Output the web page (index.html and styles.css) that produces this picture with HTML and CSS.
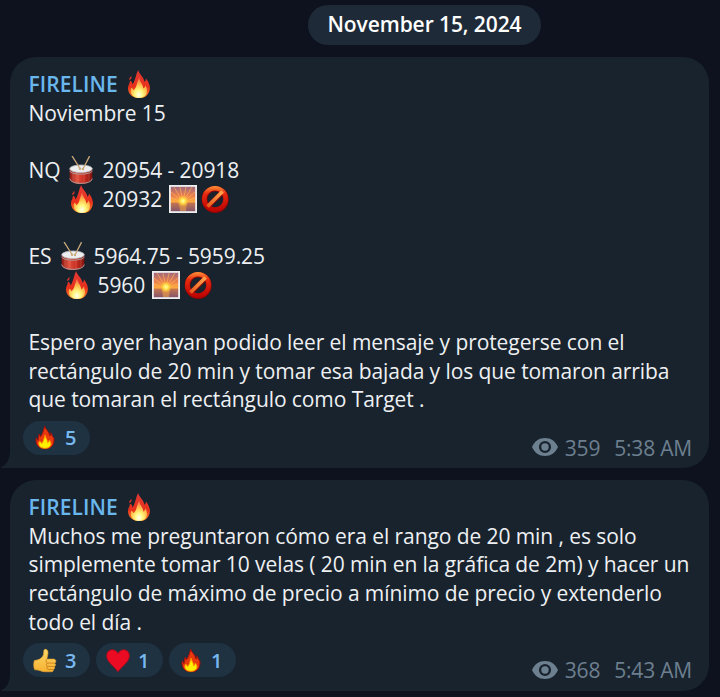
FILE: index.html
```html
<!DOCTYPE html>
<html lang="es">
<head>
<meta charset="utf-8">
<title>FIRELINE</title>
<link rel="stylesheet" href="styles.css">
</head>
<body>
<svg class="defs" width="0" height="0" aria-hidden="true">
  <defs>
    <linearGradient id="gFire" x1="0" y1="0" x2="0" y2="1"><stop offset="0" stop-color="#e23a35"/><stop offset=".6" stop-color="#e8301b"/><stop offset="1" stop-color="#ff8b27"/></linearGradient>
    <radialGradient id="gFlame" cx=".5" cy=".85" r=".8"><stop offset="0" stop-color="#fffff0"/><stop offset=".3" stop-color="#fff77c"/><stop offset=".6" stop-color="#ffc04e"/><stop offset="1" stop-color="#f4694a"/></radialGradient>
    <linearGradient id="gDrum" x1="0" y1="0" x2="1" y2="0"><stop offset="0" stop-color="#8e1712"/><stop offset=".3" stop-color="#e0513f"/><stop offset=".65" stop-color="#c92d20"/><stop offset="1" stop-color="#7e120e"/></linearGradient>
    <linearGradient id="gSky" x1="0" y1="0" x2="0" y2="1"><stop offset="0" stop-color="#a0697f"/><stop offset=".35" stop-color="#ea7c4e"/><stop offset=".63" stop-color="#ffac3d"/><stop offset=".66" stop-color="#c4744f"/><stop offset="1" stop-color="#85566b"/></linearGradient>
    <radialGradient id="gSun"><stop offset="0" stop-color="#ffffb0"/><stop offset=".4" stop-color="#ffe54a"/><stop offset="1" stop-color="#ffb52f" stop-opacity="0"/></radialGradient>
    <linearGradient id="gBan" gradientUnits="userSpaceOnUse" x1="0" y1="1" x2="0" y2="27"><stop offset="0" stop-color="#ff9238"/><stop offset=".3" stop-color="#e62a10"/><stop offset="1" stop-color="#b80000"/></linearGradient>
    <linearGradient id="gBar" gradientUnits="userSpaceOnUse" x1="21" y1="6" x2="7" y2="21"><stop offset="0" stop-color="#ffa84d"/><stop offset="1" stop-color="#ea5a20"/></linearGradient>
    <linearGradient id="gThumb" x1="0" y1="0" x2="0" y2="1"><stop offset="0" stop-color="#ffd867"/><stop offset="1" stop-color="#f5b232"/></linearGradient>
    <symbol id="fire" viewBox="0 0 28 28">
      <path fill="url(#gFire)" d="M13.200 0C13.800 4 18.700 6.500 19.500 11.800C20.600 11 21 9.600 20.800 8.200C24.300 12.500 26.500 18 23.600 23C21.600 26.800 18 28.200 14.300 28.200C8 28.200 3.200 24.400 3 18.500C2.900 14.800 5.200 13.800 4.800 10.600C6.600 11.300 7.400 12.800 7.500 14.500C10.400 10.500 10.800 4.500 13.200 0ZM6 5.800C7.200 7.800 6.200 9.500 4.300 9.800C3.200 8.600 5.900 7.700 6 5.800Z"/>
      <path fill="url(#gFlame)" d="M14.200 7.500C14.500 12 18.500 14.500 18.200 18.500C19.700 17.800 20.300 16.500 20.400 15.200C22.700 19 22.500 23.500 20 26C16.500 28.500 11 28.600 8 26C5.500 23.600 5.300 20.500 6.300 17.800C7.500 18.300 8.200 19.200 8.500 20.200C12.200 17.200 11.500 12.500 14.200 7.500Z"/>
    </symbol>
    <symbol id="fireflat" viewBox="0 0 24 26">
      <path fill="#e8380d" stroke="#a60d0b" d="M11.800 1.300C12.400 5 16.300 6 17 11.300C18 10.500 18.200 9.200 18 8C19.800 10 19 12 21.300 13.500C21.900 20 19 24.700 12 24.700C5.300 24.700 1.900 20 2.800 13.500C4 14.300 4.400 15.300 4.600 16.100C5.600 13.500 4.600 12 5.900 9.500C6.600 10.500 6.800 11.300 7 12.300C10.200 9 10.200 5 11.800 1.300Z"/>
      <path fill="#fff000" stroke="#ff9100" d="M12.200 10.500C12.200 13.500 14.700 14.800 14.700 18.500C16 17.800 16.300 16.800 16.500 15.700C20.500 20.500 17 24.300 12.200 24.300C6.500 24.300 4.300 20.800 6.300 17C7.600 17.500 8.300 18.500 8.500 19.300C11 17 10.800 13.500 12.200 10.500Z"/>
    </symbol>
    <symbol id="drum" viewBox="0 0 28 28">
      <path fill="url(#gDrum)" d="M2.700 13H25.300V22.500C25.300 26 20 28 14 28S2.700 26 2.700 22.500Z"/>
      <path fill="none" stroke="#eec0b0" stroke-width=".4" opacity=".5" d="M6 16V25M11 17.500V27M17 17.500V27M22 16V25"/>
      <path fill="none" stroke="#a9a3a2" stroke-width=".9" d="M2.700 22.500C3 29 25 29 25.300 22.500M2.700 14.800C3 19.300 25 19.300 25.300 14.800"/>
      <ellipse cx="14" cy="12.800" rx="11.300" ry="3.800" fill="#eceef0" stroke="#b9b9ba" stroke-width=".8"/>
      <path stroke="#c9a778" stroke-width="1.300" stroke-linecap="round" d="M5.300 .3L13 12.500M22.300 .6L16 13"/>
      <circle cx="13" cy="12.700" r="1.200" fill="#c9aa78"/><circle cx="16" cy="13" r="1.200" fill="#c9aa78"/>
    </symbol>
    <symbol id="sunrise" viewBox="0 0 28 28">
      <path fill="#eeeeef" d="M0 0H28V28H0Z"/><path fill="url(#gSky)" d="M1.800 1.800H26.200V26.200H1.800Z"/>
      <path stroke="#ffc153" stroke-width=".9" opacity=".65" d="M14 17L2 13M14 17L2 7M14 17L5 2M14 17L11 2M14 17L17 2M14 17L23 2M14 17L26 7M14 17L26 13"/>
      <path fill="#ffae43" opacity=".5" d="M10 18H18L17 26H11Z"/>
      <circle cx="14" cy="16" r="6" fill="url(#gSun)"/>
    </symbol>
    <symbol id="ban" viewBox="0 0 28 28">
      <circle cx="14.200" cy="14.400" r="10.700" fill="none" stroke="#8c0604" stroke-width="5.600"/>
      <path stroke="#8c0604" stroke-width="5" d="M6.500 22L21.500 7"/>
      <circle cx="14" cy="14" r="10.700" fill="none" stroke="url(#gBan)" stroke-width="4.600"/>
      <path stroke="url(#gBar)" stroke-width="3.800" d="M6.500 21.500L21.500 6.500"/>
    </symbol>
    <symbol id="thumb" viewBox="0 0 26 26">
      <path fill="url(#gThumb)" stroke="#e9a22e" stroke-width=".7" d="M1.500 13C5.500 12.800 8.500 11.500 10.500 8.500C12 6.300 11.300 2.900 12 1.500C13 .3 15.300 .8 16 2.800C16.800 5.600 15.500 8.500 15 11.500H22.500C25.300 11.800 25.400 15.300 23.400 15.900C25 17 24.500 19 23 19.500C24 20.800 23.300 22.300 22 22.700C22.500 24.300 21.300 25.200 19.500 25.200H13C9.500 25.200 7 23 1.800 23C.5 20 .5 16 1.500 13Z"/>
      <path fill="none" stroke="#c87a1d" stroke-width=".9" stroke-linecap="round" d="M15 11.800C13.500 12.500 13.700 15 15.500 15.800H23M15.500 15.800C13.800 17 14.200 18.800 15.700 19.400H22.500M15.700 19.400C14.500 20.700 15 22.300 16.300 22.700H21.500"/>
    </symbol>
    <symbol id="heart" viewBox="0 0 26 26">
      <path fill="#eb0b22" stroke="#99101f" stroke-width="1" d="M13 5.500C14.500 2.400 17 1.200 19.500 1.300C23.500 1.500 25.800 5 25.300 9C24.300 15.500 17.500 19 13 25.300C8.500 19 1.700 15.500 .7 9C.2 5 2.500 1.500 6.500 1.300C9 1.200 11.500 2.400 13 5.500Z"/>
    </symbol>
    <symbol id="eye" viewBox="0 0 26 18">
      <path fill="#6d8090" fill-rule="evenodd" d="M0 9C2.500 3.200 7.200 0 13 0S23.500 3.200 26 9C23.500 14.800 18.800 18 13 18S2.500 14.800 0 9ZM13 2.900A6.100 6.100 0 1 0 13 15.100A6.100 6.100 0 1 0 13 2.900Z"/>
      <circle cx="13" cy="9" r="3.700" fill="#6d8090"/>
    </symbol>
    <symbol id="tail" viewBox="0 0 28 30"><path fill="#18232e" d="M9 0H28V30H1C0 30 .3 29 1.500 28.500C6.500 25.800 9 20 9 12Z"/></symbol>
  </defs>
</svg>

<main class="chat">
  <div class="date">November 15, 2024</div>

  <article class="bubble first">
    <svg class="tail"><use href="#tail"/></svg>
    <div class="line name"><span>FIRELINE</span><svg class="emoji"><use href="#fire"/></svg></div>
    <div class="line">Noviembre 15</div>
    <div class="line"></div>
    <div class="line"><span>NQ</span><svg class="emoji"><use href="#drum"/></svg><span>20954 - 20918</span></div>
    <div class="line nq"><svg class="emoji"><use href="#fire"/></svg><span>20932</span><svg class="emoji"><use href="#sunrise"/></svg><svg class="emoji ban"><use href="#ban"/></svg></div>
    <div class="line"></div>
    <div class="line"><span>ES</span><svg class="emoji"><use href="#drum"/></svg><span>5964.75 - 5959.25</span></div>
    <div class="line es"><svg class="emoji"><use href="#fire"/></svg><span>5960</span><svg class="emoji"><use href="#sunrise"/></svg><svg class="emoji ban"><use href="#ban"/></svg></div>
    <div class="line"></div>
    <div class="line">Espero ayer hayan podido leer el mensaje y protegerse con el</div>
    <div class="line">rectángulo de 20 min y tomar esa bajada y los que tomaron arriba</div>
    <div class="line">que tomaran el rectángulo como Target .</div>
    <footer class="footer">
      <div class="reactions"><div class="reaction"><svg><use href="#fireflat"/></svg>5</div></div>
      <div class="meta"><svg class="eye"><use href="#eye"/></svg><span class="views">359</span><span>5:38 AM</span></div>
    </footer>
  </article>

  <article class="bubble second">
    <svg class="tail"><use href="#tail"/></svg>
    <div class="line name"><span>FIRELINE</span><svg class="emoji"><use href="#fire"/></svg></div>
    <div class="line">Muchos me preguntaron cómo era el rango de 20 min , es solo</div>
    <div class="line">simplemente tomar 10 velas ( 20 min en la gráfica de 2m) y hacer un</div>
    <div class="line">rectángulo de máximo de precio a mínimo de precio y extenderlo</div>
    <div class="line">todo el día .</div>
    <footer class="footer">
      <div class="reactions">
        <div class="reaction"><svg><use href="#thumb"/></svg>3</div>
        <div class="reaction"><svg><use href="#heart"/></svg>1</div>
        <div class="reaction"><svg><use href="#fireflat"/></svg>1</div>
      </div>
      <div class="meta"><svg class="eye"><use href="#eye"/></svg><span class="views">368</span><span>5:43 AM</span></div>
    </footer>
  </article>
</main>
</body>
</html>
```
FILE: styles.css
```css
* { box-sizing: border-box; }
body {
  margin: 0;
  background: #0d121e;
  color: #eef0f2;
  font-family: "Open Sans", "Noto Sans", sans-serif;
  font-size: 21px;
  letter-spacing: -0.082px;
}
.defs { position: absolute; }
.chat {
  height: 697px;
  overflow: hidden;
  display: flex;
  flex-direction: column;
  padding: 5px 11px 0 10px;
}
.date {
  align-self: flex-start;
  width: 233px;
  height: 40px;
  margin: 0 0 12px 298px;
  border-radius: 20px;
  background: #1e2a37;
  color: #fff;
  font-weight: 600;
  font-size: 21px;
  line-height: 39px;
  text-align: center;
  white-space: nowrap;
}
.bubble {
  position: relative;
  flex: none;
  background: #18232e;
  border-radius: 26px 26px 26px 0;
  padding: 13px 17px 0 18.5px;
}
.first { height: 411px; margin-bottom: 12px; }
.second { height: 211px; }
.tail {
  position: absolute;
  left: -9px;
  bottom: 0;
  width: 28px;
  height: 30px;
}
.line {
  display: flex;
  align-items: center;
  gap: 7px;
  height: 28.67px;
  line-height: 28.67px;
  white-space: nowrap;
}
.name { color: #6ab7ee; font-weight: 600; letter-spacing: 0.08px; }
.emoji { width: 28px; height: 28px; flex: none; }
.nq { padding-left: 39px; }
.es { padding-left: 34px; }
.ban { margin-left: -3px; }
.footer {
  position: relative;
  display: flex;
  justify-content: space-between;
  margin: 7px 0 0 -5.5px;
}
.reactions { display: flex; gap: 6.5px; }
.reaction {
  display: flex;
  align-items: center;
  gap: 8px;
  width: 66.5px;
  height: 34px;
  padding-left: 10px;
  border-radius: 17px;
  background: #1e3242;
  color: #78b8f0;
  font-size: 20px;
  font-weight: 600;
}
.reaction svg { width: 24px; height: 25px; }
.meta {
  display: flex;
  align-items: center;
  height: 28px;
  margin-top: 13px;
  color: #6d7f8e;
  font-size: 21px;
  letter-spacing: -0.2px;
}
.eye { width: 26px; height: 18px; margin: -1px 7px 0 0; }
.views { margin-right: 14px; }
```
